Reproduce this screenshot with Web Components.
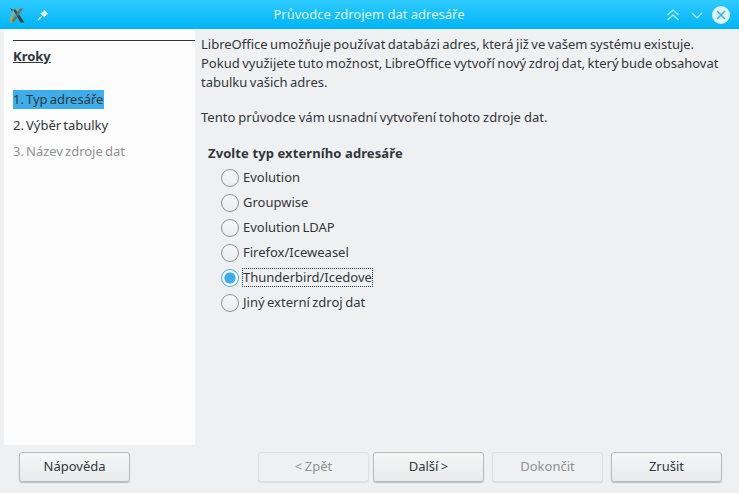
<!DOCTYPE html>
<html lang="cs"><head><meta charset="utf-8"><title>Průvodce</title>
<style>
html,body{margin:0;padding:0;width:739px;height:493px;overflow:hidden;background:#eff0f1}
body{font:13px/19px "Noto Sans","Open Sans",sans-serif;color:#31363b;word-spacing:-.9px}
</style></head><body>
<wizard-app></wizard-app>
<script>
function def(name,css,html){
  customElements.define(name,class extends HTMLElement{
    constructor(){super();const r=this.attachShadow({mode:"open"});r.innerHTML="<style>"+css+"</style>"+html;}
  });
}
def("title-bar",`
:host{display:flex;align-items:center;height:29px;background:linear-gradient(#2ecbff,#00b4f5);box-sizing:border-box;padding:0 9px 0 8px;word-spacing:0}
.l,.r{display:flex;align-items:center;width:70px;flex:none}
.l{gap:11px}
.r{justify-content:flex-end}
.t{flex:1;text-align:center;font-size:13px;color:#dff5ff}
svg{display:block}
`,`<div class="l">
<svg width="18" height="18" viewBox="0 0 18 18"><path d="M3 16.5C2.5 11 5 6.5 9.5 3.5" stroke="#c2a24e" stroke-width="2" fill="none"/><path d="M5 3.5h2.6L16.5 16.5h-4z" fill="#3e423f"/><path d="M15.5 2.5L9.8 10 8 8l4-5.500z" fill="#6b7570"/><path d="M3.500 15l4-5.500 1.800 2-3.500 5z" fill="#7a7448"/><path d="M2 2l3 2-1 1z" fill="#2a2d2b"/></svg>
<svg width="12" height="12" viewBox="0 0 12 12"><path d="M7 .8L11.2 5 9.600 5.600 7.400 8.600 3.400 4.600 6.400 2.400z" fill="#f2fbff"/><path d="M4.600 7.400L1 11" stroke="#f2fbff" stroke-width="1.2"/></svg>
</div><div class="t"><slot></slot></div><div class="r">
<svg width="14" height="14" viewBox="0 0 14 14" fill="none" stroke="#bfeeff" stroke-width="1.2"><path d="M1.500 7l5.500-5 5.500 5M1.500 12l5.500-5 5.500 5"/></svg>
<svg width="12" height="14" viewBox="0 0 12 14" fill="none" stroke="#bfeeff" stroke-width="1.2" style="margin:0 9px 0 11px"><path d="M1 5l5 5 5-5"/></svg>
<svg width="18" height="18" viewBox="0 0 18 18"><circle cx="9" cy="9" r="9" fill="#dff5ff"/><path d="M5 5l8 8M13 5l-8 8" stroke="#35b3e6" stroke-width="1.5"/></svg>
</div>`);
def("step-list",`
:host{display:block;margin-left:4px;width:182px;padding:11px 0 0 9px;background:#fcfcfc;height:405px;flex:none}
.h{border-top:1px solid #31363b;padding-top:6px;font-weight:700;height:43px;line-height:19px}
.h span{text-decoration:underline}
`,`<div class="h"><span>Kroky</span></div><slot></slot>`);
def("step-item",`
:host{display:block;height:26px;line-height:19px;word-spacing:-1.3px}
span{display:inline-block;padding-right:1px}
:host([active]) span{background:#3daee9}
:host([disabled]) span{color:#8f9192}
`,`<span><slot></slot></span>`);
def("radio-item",`
:host{display:flex;align-items:center;height:25px;margin-left:20px;gap:3px}
i{display:block;width:16px;height:16px;border:1px solid #8e9193;border-radius:50%;background:linear-gradient(#f5f6f6,#eceded);flex:none}
:host([checked]) i{border-color:#3daee9;background:radial-gradient(circle,#3daee9 0 5.2px,#fcfcfc 6px)}
span{padding:0 1px;line-height:19px}
:host([checked]) span{outline:1px dotted #31363b;outline-offset:-1px}
`,`<i></i><span><slot></slot></span>`);
def("push-button",`
:host{display:block;width:111px;height:30px;box-sizing:border-box;border:1px solid #b8babc;border-radius:3px;background:linear-gradient(#f5f6f6,#e9eaeb);text-align:center;line-height:27px;box-shadow:0 1px 1px rgba(0,0,0,.22)}
:host([disabled]){color:#8f9192;border-color:#dcdee0;background:#eff0f1;box-shadow:0 1px 1px rgba(0,0,0,.08)}
`,`<slot></slot>`);
def("wizard-main",`
:host{display:block;flex:1;padding:6px 8px 0 6px;min-width:0}
p{margin:0 0 16px;line-height:19px}
h3{font-size:13px;font-weight:700;margin:0;padding:0 0 0 7px;line-height:19px;word-spacing:0;letter-spacing:.1px}
.g{margin-top:2px}
`,`<p>LibreOffice umožňuje používat databázi adres, která již ve vašem systému existuje.<br>Pokud využijete tuto možnost, LibreOffice vytvoří nový zdroj dat, který bude obsahovat<br>tabulku vašich adres.</p>
<p style="margin-bottom:17px;word-spacing:-.35px">Tento průvodce vám usnadní vytvoření tohoto zdroje dat.</p>
<h3>Zvolte typ externího adresáře</h3><div class="g"><slot></slot></div>`);
def("wizard-footer",`
:host{display:flex;height:48px;padding:7px 17px 0 19px;box-sizing:border-box}
.s{flex:1}.b{display:flex}
.b push-button+push-button{margin-left:8px}
.b push-button:nth-child(2){margin-left:4px}
`,`<push-button>Nápověda</push-button><div class="s"></div><div class="b"><push-button disabled>&lt; Zpět</push-button><push-button>Další &gt;</push-button><push-button disabled>Dokončit</push-button><push-button>Zrušit</push-button></div>`);
def("wizard-app",`
:host{display:flex;flex-direction:column;width:739px;height:493px}
.m{display:flex;height:416px}
`,`<title-bar>Průvodce zdrojem dat adresáře</title-bar>
<div class="m"><step-list><step-item active>1. Typ adresáře</step-item><step-item>2. Výběr tabulky</step-item><step-item disabled>3. Název zdroje dat</step-item></step-list>
<wizard-main><radio-item>Evolution</radio-item><radio-item>Groupwise</radio-item><radio-item>Evolution LDAP</radio-item><radio-item>Firefox/Iceweasel</radio-item><radio-item checked>Thunderbird/Icedove</radio-item><radio-item>Jiný externí zdroj dat</radio-item></wizard-main></div>
<wizard-footer></wizard-footer>`);
</script></body></html>
